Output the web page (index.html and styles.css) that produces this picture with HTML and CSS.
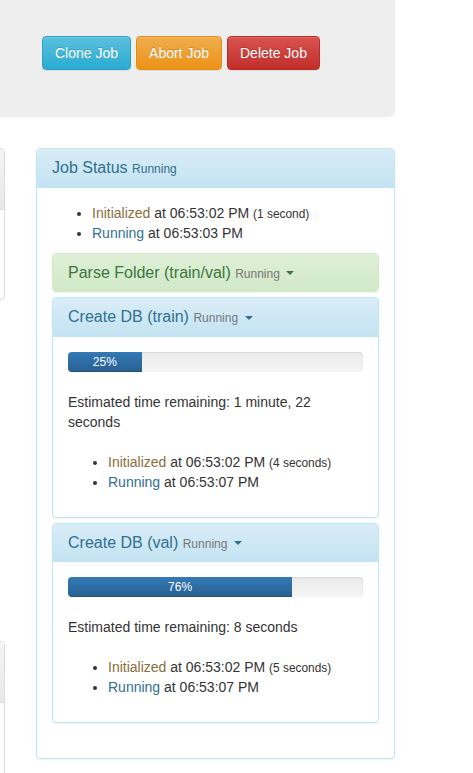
FILE: index.html
```html
<!DOCTYPE html>
<html>
<head>
<meta charset="utf-8">
<link rel="stylesheet" href="styles.css">
</head>
<body>
<div class="page">
  <div class="jumbotron">
    <div class="actions">
      <button class="btn btn-info">Clone Job</button>
      <button class="btn btn-warning">Abort Job</button>
      <button class="btn btn-danger">Delete Job</button>
    </div>
  </div>
  <div class="row">
    <div class="col-left">
      <div class="panel panel-default side-panel first">
        <div class="panel-heading tall"></div>
        <div class="panel-body side-body"></div>
      </div>
      <div class="panel panel-default side-panel second">
        <div class="panel-heading tall"></div>
        <div class="panel-body side-body long"></div>
      </div>
    </div>
    <div class="col-right">
      <div class="panel panel-info">
        <div class="panel-heading">
          <h4 class="panel-title">Job Status <small class="status-info">Running</small></h4>
        </div>
        <div class="panel-body">
          <ul class="steps">
            <li><span class="text-warning">Initialized</span> at 06:53:02 PM <small>(1 second)</small></li>
            <li><span class="text-info">Running</span> at 06:53:03 PM</li>
          </ul>
          <div class="panel-group">
            <div class="panel panel-success collapsed">
              <div class="panel-heading">
                <h4 class="panel-title">Parse Folder (train/val) <small>Running</small> <span class="caret"></span></h4>
              </div>
            </div>
            <div class="panel panel-info">
              <div class="panel-heading">
                <h4 class="panel-title">Create DB (train) <small>Running</small> <span class="caret"></span></h4>
              </div>
              <div class="panel-body">
                <div class="progress"><div class="progress-bar" style="width: 25%">25%</div></div>
                <p class="eta">Estimated time remaining: 1 minute, 22 seconds</p>
                <ul class="steps spaced">
                  <li><span class="text-warning">Initialized</span> at 06:53:02 PM <small>(4 seconds)</small></li>
                  <li><span class="text-info">Running</span> at 06:53:07 PM</li>
                </ul>
              </div>
            </div>
            <div class="panel panel-info">
              <div class="panel-heading">
                <h4 class="panel-title">Create DB (val) <small>Running</small> <span class="caret"></span></h4>
              </div>
              <div class="panel-body">
                <div class="progress"><div class="progress-bar" style="width: 76%">76%</div></div>
                <p class="eta">Estimated time remaining: 8 seconds</p>
                <ul class="steps spaced">
                  <li><span class="text-warning">Initialized</span> at 06:53:02 PM <small>(5 seconds)</small></li>
                  <li><span class="text-info">Running</span> at 06:53:07 PM</li>
                </ul>
              </div>
            </div>
          </div>
        </div>
      </div>
    </div>
  </div>
</div>
</body>
</html>
```
FILE: styles.css
```css
* { box-sizing: border-box; }
html, body { margin: 0; padding: 0; background: #fff; }
body {
  font-family: "Liberation Sans", Arial, sans-serif;
  font-size: 14px;
  line-height: 20px;
  color: #333;
  overflow: hidden;
}
.page {
  margin-left: -300px;
  width: 695px;
}
.jumbotron {
  background: #eee;
  border-radius: 6px;
  margin-top: -30px;
  padding: 66px 0 47px 342px;
}
.actions { display: flex; gap: 5px; }
.btn {
  font-family: "Liberation Sans", Arial, sans-serif;
  font-size: 14px;
  line-height: 20px;
  padding: 6px 12px;
  border-radius: 4px;
  border: 1px solid transparent;
  color: #fff;
  text-shadow: 0 -1px 0 rgba(0,0,0,.2);
  box-shadow: inset 0 1px 0 rgba(255,255,255,.15), 0 1px 1px rgba(0,0,0,.075);
  cursor: pointer;
}
.btn-info { background: linear-gradient(#5bc0de, #2aabd2); border-color: #28a4c9; }
.btn-warning { background: linear-gradient(#f0ad4e, #eb9316); border-color: #e38d13; }
.btn-danger { background: linear-gradient(#d9534f, #c12e2a); border-color: #b92c28; }

.row {
  display: grid;
  grid-template-columns: 305px 359px;
  column-gap: 31px;
  margin-top: 31px;
  align-items: start;
}
.panel {
  background: #fff;
  border: 1px solid transparent;
  border-radius: 4px;
  box-shadow: 0 1px 2px rgba(0,0,0,.05);
  margin-bottom: 20px;
}
.panel-heading {
  padding: 10px 15px;
  border-bottom: 1px solid transparent;
  border-top-left-radius: 3px;
  border-top-right-radius: 3px;
}
.panel-title {
  margin: 0;
  font-size: 16px;
  font-weight: 400;
  line-height: 17.5px;
  height: 17.5px;
  white-space: nowrap;
}
.panel-title small {
  font-size: 75%;
  color: #777;
  line-height: 1;
}
.panel-title small.status-info { color: #31708f; }
.panel-body { padding: 15px; }

.panel-default { border-color: #ddd; }
.panel-default > .panel-heading {
  background: linear-gradient(#f5f5f5, #e8e8e8);
  border-bottom-color: #ddd;
}
.panel-info { border-color: #bce8f1; }
.panel-info > .panel-heading {
  color: #31708f;
  background: linear-gradient(#d9edf7, #c4e3f3);
  border-bottom-color: #bce8f1;
}
.panel-success { border-color: #d6e9c6; }
.panel-success > .panel-heading {
  color: #3c763d;
  background: linear-gradient(#dff0d8, #d0e9c6);
}
.collapsed > .panel-heading { border-bottom: 0; border-radius: 3px; }

.side-panel .tall { height: 61px; }
.side-body { height: 89px; }
.side-panel.second { margin-top: 341px; }
.side-body.long { height: 200px; }

.steps { margin: 0 0 10px; padding-left: 40px; }
.steps.spaced { margin-top: 20px; }
.steps small { font-size: 85%; line-height: 1; }
.text-warning { color: #8a6d3b; }
.text-info { color: #31708f; }

.panel-group { margin-bottom: 20px; }
.panel-group .panel { margin-bottom: 0; }
.panel-group .panel + .panel { margin-top: 5px; }

.caret {
  display: inline-block;
  width: 0;
  height: 0;
  margin-left: 2px;
  vertical-align: middle;
  border-top: 4px solid;
  border-left: 4px solid transparent;
  border-right: 4px solid transparent;
}
.progress {
  height: 20px;
  margin-bottom: 20px;
  overflow: hidden;
  border-radius: 4px;
  background: linear-gradient(#ebebeb, #f5f5f5);
  box-shadow: inset 0 1px 2px rgba(0,0,0,.1);
}
.progress-bar {
  height: 100%;
  font-size: 12px;
  line-height: 20px;
  color: #fff;
  text-align: center;
  background: linear-gradient(#337ab7, #286090);
  box-shadow: inset 0 -1px 0 rgba(0,0,0,.15);
}
.eta { margin: 0 0 10px; }
```
